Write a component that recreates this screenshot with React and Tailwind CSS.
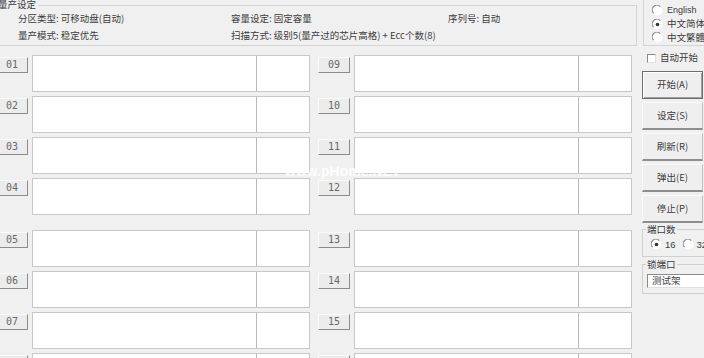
import React from 'react';

const LEFT_PORTS = ['01', '02', '03', '04', '05', '06', '07', '08'];
const RIGHT_PORTS = ['09', '10', '11', '12', '13', '14', '15', '16'];
const ACTIONS = ['开始(A)', '设定(S)', '刷新(R)', '弹出(E)', '停止(P)'];

function Radio({ checked }) {
    return (
        <svg width="11" height="11" viewBox="0 0 11 11" className="shrink-0">
            <circle cx="5.5" cy="5.5" r="5" fill="#fff" />
            <path d="M1.6 8.2 A4.5 4.5 0 0 1 8.2 1.6" stroke="#8a8a8a" strokeWidth="1.2" fill="none" />
            {checked && <circle cx="5.5" cy="5.5" r="1.8" fill="#333" />}
        </svg>
    );
}

function PortRow({ id, extra }) {
    return (
        <div className={`flex items-start gap-[4px] h-[37px] ${extra || ''}`}>
            <button className="mt-[2px] w-[32px] h-[16px] shrink-0 flex items-center justify-center bg-[#ececec] border border-t-[#fafafa] border-l-[#fafafa] border-r-[#8c8c8c] border-b-[#8c8c8c] text-[10px] leading-none text-[#6a6a6a] font-['DejaVu_Sans_Mono',monospace]">
                {id}
            </button>
            <div className="flex h-[37px] w-[278px] bg-white border border-[#c8c8c8]">
                <div className="w-[224px] border-r border-[#b8b8b8]" />
                <div className="flex-1" />
            </div>
        </div>
    );
}

function PortColumn({ ports, className }) {
    return (
        <div className={`flex flex-col gap-[4px] ${className}`}>
            {ports.map((p, i) => (
                <PortRow key={p} id={p} extra={i === 4 ? 'mt-[11px]' : ''} />
            ))}
        </div>
    );
}

export default function App() {
    return (
        <div className="w-[704px] h-[358px] overflow-hidden bg-[#f0f0f0] flex text-[#3c3c3c] font-['Noto_Sans_CJK_SC','Noto_Sans',sans-serif] text-[9.5px] leading-none">
            {/* main area */}
            <div className="w-[641px] shrink-0 flex flex-col">
                <div className="relative mt-[5px] ml-[-3px] w-[640px] h-[41px] border border-[#d4d4d4] shrink-0">
                    <span className="absolute left-[0px] top-[-6px] bg-[#f0f0f0] pr-[2px]">量产设定</span>
                    <div className="grid grid-cols-[213px_217px_1fr] gap-y-[7px] pl-[20px] pt-[8px]">
                        <span>分区类型: 可移动盘(自动)</span>
                        <span>容量设定: 固定容量</span>
                        <span>序列号: 自动</span>
                        <span>量产模式: 稳定优先</span>
                        <span className="col-span-2">扫描方式: 级别5(量产过的芯片高格) + Ecc个数(8)</span>
                    </div>
                </div>
                <div className="relative flex gap-[8px] mt-[9px] ml-[-4px]">
                    <PortColumn ports={LEFT_PORTS} className="w-[314px]" />
                    <PortColumn ports={RIGHT_PORTS} className="w-[314px]" />
                    <span className="absolute left-[289px] top-[109px] text-[14px] font-bold text-white/85 font-['Liberation_Sans',sans-serif]">www.pHome.NET</span>
                </div>
            </div>

            {/* side panel */}
            <div className="flex-1 flex flex-col">
                <div className="ml-[2px] mt-[-2px] h-[48px] border border-[#d4d4d4] flex flex-col gap-[2.5px] pl-[8px] pt-[6px]">
                    <label className="flex items-center gap-[4px] h-[11px]"><Radio /><span className="font-['Liberation_Sans',sans-serif] text-[9px]">English</span></label>
                    <label className="flex items-center gap-[4px] h-[11px]"><Radio checked /><span>中文简体</span></label>
                    <label className="flex items-center gap-[4px] h-[11px]"><Radio /><span>中文繁體</span></label>
                </div>
                <label className="flex items-center gap-[4px] ml-[6px] mt-[7px] h-[10px]">
                    <span className="w-[9px] h-[9px] bg-white border border-t-[#8a8a8a] border-l-[#8a8a8a] border-r-[#e0e0e0] border-b-[#e0e0e0]" />
                    <span>自动开始</span>
                </label>
                <div className="flex flex-col gap-[3px] mt-[8px] ml-[1px]">
                    {ACTIONS.map((a, i) => (
                        <button
                            key={a}
                            className={`w-[61px] h-[28px] flex items-center justify-center bg-[#efefef] text-[9.5px] ${i === 0 ? 'border border-[#6e6e6e] shadow-[inset_1px_1px_0_#fff,inset_-1px_-1px_0_#a0a0a0]' : 'border-b-2 border-b-[#8e8e8e] border-l border-l-[#fafafa] border-t border-t-[#fafafa] border-r border-r-[#c0c0c0]'}`}
                        >
                            {a}
                        </button>
                    ))}
                </div>
                <div className="relative ml-[1px] mt-[6px] h-[28px] border border-[#d0d0d0] flex items-end gap-[7px] pl-[8px] pb-[6px] overflow-visible">
                    <span className="absolute left-[3px] top-[-5px] bg-[#f0f0f0] px-[1px]">端口数</span>
                    <label className="flex items-center gap-[3px] shrink-0"><Radio checked /><span className="font-['Liberation_Sans',sans-serif]">16</span></label>
                    <label className="flex items-center gap-[3px] shrink-0"><Radio /><span className="font-['Liberation_Sans',sans-serif]">32</span></label>
                </div>
                <div className="relative ml-[1px] mt-[7px] h-[30px] border border-[#d0d0d0] pl-[4px] pt-[9px]">
                    <span className="absolute left-[3px] top-[-5px] bg-[#f0f0f0] px-[1px]">锁端口</span>
                    <div className="h-[14px] bg-white border border-t-[#8a8a8a] border-l-[#8a8a8a] border-r-[#e0e0e0] border-b-[#e0e0e0] flex items-center pl-[4px]">
                        测试架
                    </div>
                </div>
            </div>
        </div>
    );
}
